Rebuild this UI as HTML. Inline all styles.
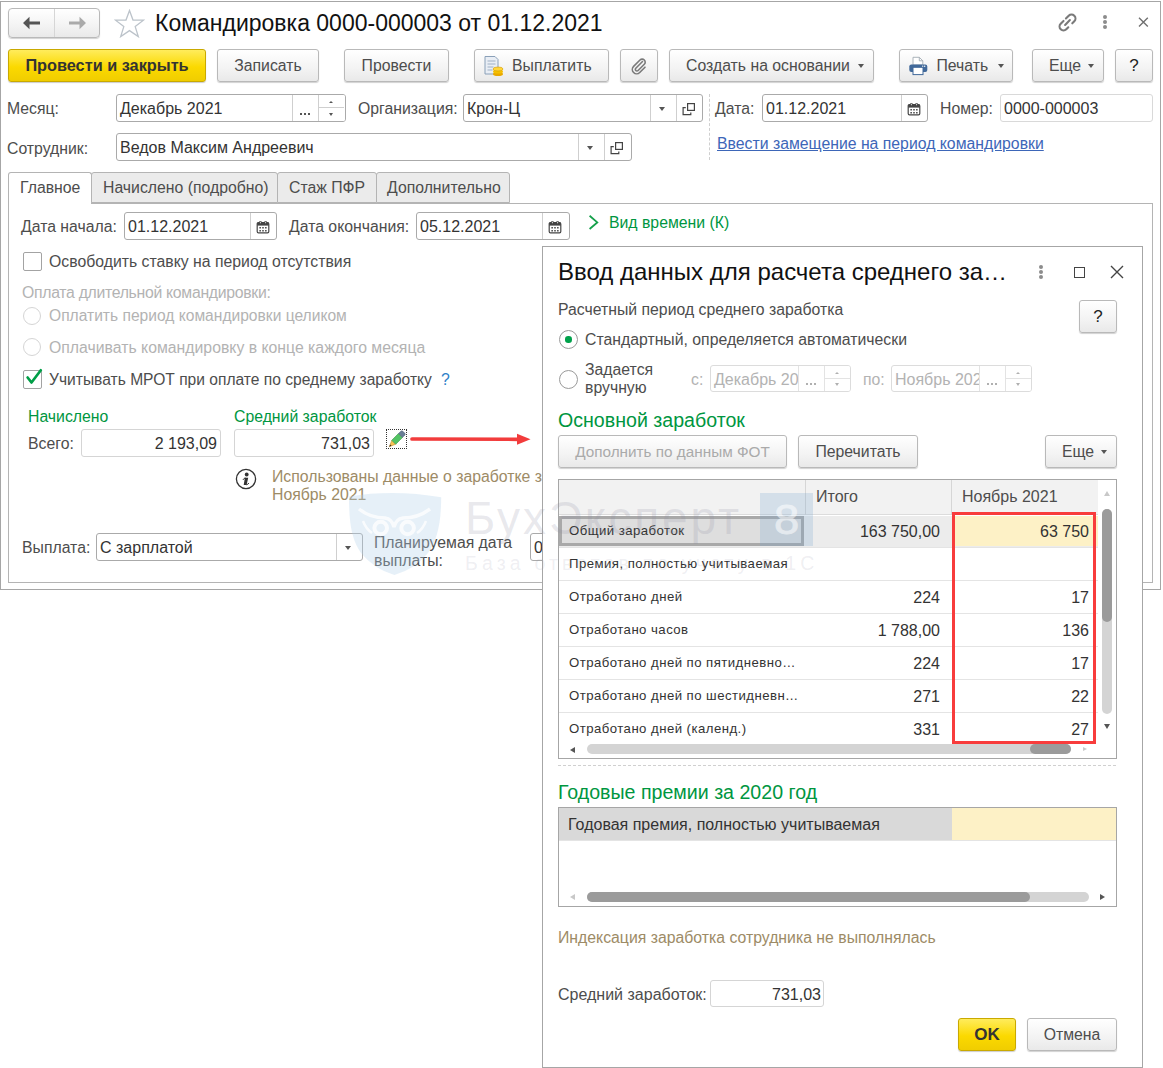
<!DOCTYPE html>
<html><head><meta charset="utf-8">
<style>
*{box-sizing:border-box;margin:0;padding:0}
html,body{width:1163px;height:1068px;overflow:hidden;background:#fff}
body{position:relative;font-family:"Liberation Sans",sans-serif;font-size:15.8px;color:#4d4d4d}
.a{position:absolute}
.t{position:absolute;white-space:nowrap;line-height:20px;margin-top:1px}
.btn{position:absolute;border:1px solid #b9b9b9;border-radius:3px;background:linear-gradient(#ffffff,#f3f3f3 60%,#e9e9e9);box-shadow:0 1px 1px rgba(0,0,0,.18);text-align:center;white-space:nowrap;color:#4d4d4d}
.ybtn{position:absolute;border:1px solid #c9a900;border-radius:3px;background:linear-gradient(#ffec5c,#fbd900 55%,#f0cd00);box-shadow:0 1px 1px rgba(0,0,0,.2);text-align:center;white-space:nowrap;color:#333;font-weight:bold}
.fld{position:absolute;border:1px solid #aaaaaa;border-radius:3px;background:#fff;white-space:nowrap;overflow:hidden}
.fld .t{font-size:16px}
.vd{position:absolute;top:0;bottom:0;width:1px;background:#cfcfcf}
.grn{color:#00963f}
.dis{color:#b3b3b3}
.tan{color:#9d8b66}
</style></head><body>

<!-- main window -->
<div class="a" style="left:0;top:1px;width:1161px;height:589px;border:1px solid #a6a6a6"></div>
<div class="a" style="left:8px;top:203px;width:1145px;height:380px;border:1px solid #b4b4b4"></div>

<!-- header -->
<div class="btn" style="left:8px;top:8px;width:92px;height:30px;border-radius:4px"></div>
<div class="a" style="left:54px;top:9px;width:1px;height:28px;background:#d6d6d6"></div>
<svg class="a" style="left:22px;top:15px" width="20" height="16" viewBox="0 0 20 16"><path d="M1 8 L7.5 1.8 L7.5 6.4 L18 6.4 L18 9.6 L7.5 9.6 L7.5 14.2 Z" fill="#555"/></svg>
<svg class="a" style="left:67px;top:15px" width="20" height="16" viewBox="0 0 20 16"><path d="M19 8 L12.5 1.8 L12.5 6.4 L2 6.4 L2 9.6 L12.5 9.6 L12.5 14.2 Z" fill="#aaa"/></svg>
<svg class="a" style="left:113.5px;top:9px" width="31" height="29" viewBox="0 0 31 29"><path d="M15.5 1.5 L19 11 L29.5 11.2 L21.2 17.6 L24.3 27.6 L15.5 21.6 L6.7 27.6 L9.8 17.6 L1.5 11.2 L12 11 Z" fill="none" stroke="#bcc3ca" stroke-width="1.3" stroke-linejoin="miter"/></svg>
<div class="t" style="left:155px;top:8px;font-size:23px;line-height:28px;color:#111">Командировка 0000-000003 от 01.12.2021</div>
<svg class="a" style="left:1055px;top:9.5px" width="25" height="25" viewBox="0 0 25 25"><g transform="translate(12.5 12.5) scale(1.13) rotate(-45) translate(-12.5 -12.5)" fill="none" stroke="#7a7a7a" stroke-width="1.85" stroke-linecap="round"><path d="M11 9 H7.5 A3.5 3.5 0 0 0 7.5 16 H10"/><path d="M14 9 H17.5 A3.5 3.5 0 0 1 17.5 16 H15"/><path d="M9.5 12.5 H15.5"/></g></svg>
<div class="a" style="left:1102.6px;top:14.5px;width:4px;height:4px;border-radius:50%;background:#8c8c8c"></div>
<div class="a" style="left:1102.6px;top:19.5px;width:4px;height:4px;border-radius:50%;background:#8c8c8c"></div>
<div class="a" style="left:1102.6px;top:24.5px;width:4px;height:4px;border-radius:50%;background:#8c8c8c"></div>
<svg class="a" style="left:1137px;top:16px" width="12" height="12" viewBox="0 0 12 12"><path d="M2 1.8 L10.8 10.4 M10.8 1.8 L2 10.4" stroke="#707070" stroke-width="1.4"/></svg>

<!-- toolbar -->
<div class="ybtn" style="left:8px;top:49px;width:198px;height:33px;line-height:31px;font-size:16.3px">Провести и закрыть</div>
<div class="btn" style="left:217px;top:49px;width:102px;height:33px;line-height:31px">Записать</div>
<div class="btn" style="left:344px;top:49px;width:105px;height:33px;line-height:31px">Провести</div>
<div class="btn" style="left:474px;top:49px;width:135px;height:33px;line-height:31px;text-align:left;padding-left:37px">Выплатить</div>
<svg class="a" style="left:483px;top:55px" width="22" height="22" viewBox="0 0 22 22"><path d="M2 1.5 H12 L15 4.5 V19 H2 Z" fill="#e9eef5" stroke="#8aa0b8"/><path d="M4.5 6h8M4.5 9h8M4.5 12h6M4.5 15h5" stroke="#9fb0c4"/><ellipse cx="15" cy="19" rx="5" ry="2" fill="#e8a800"/><ellipse cx="15" cy="16.5" rx="5" ry="2" fill="#f5c000"/><ellipse cx="15" cy="14" rx="5" ry="2" fill="#ffd53a" stroke="#d49a00" stroke-width=".6"/></svg>
<div class="btn" style="left:620px;top:49px;width:38px;height:33px"></div>
<svg class="a" style="left:629px;top:56px" width="20" height="20" viewBox="0 0 20 20"><path d="M13.5 5.5 L6.8 12.2 a1.6 1.6 0 0 0 2.3 2.3 L15.3 8.3 a3 3 0 0 0 -4.3 -4.3 L4.6 10.4 a4.3 4.3 0 0 0 6.1 6.1 L16 11.2" fill="none" stroke="#7a7a7a" stroke-width="1.6" stroke-linecap="round"/></svg>
<div class="btn" style="left:669px;top:49px;width:205px;height:33px;line-height:31px;text-align:left;padding-left:16px">Создать на основании</div>
<div class="a" style="left:858px;top:64px;width:0;height:0;border-left:3.5px solid transparent;border-right:3.5px solid transparent;border-top:4px solid #555"></div>
<div class="btn" style="left:899px;top:49px;width:114px;height:33px;line-height:31px;text-align:left;padding-left:36.5px">Печать</div>
<svg class="a" style="left:907px;top:55px" width="22" height="22" viewBox="0 0 22 22"><path d="M6 2.3 H12.3 L15.8 5.8 V10 H6 Z" fill="#fff" stroke="#a3abb3" stroke-width=".9"/><path d="M12.3 2.3 V5.8 H15.8" fill="none" stroke="#a3abb3" stroke-width=".9"/><rect x="2.3" y="9.4" width="18" height="7.6" rx="2" fill="#41699a"/><circle cx="15.7" cy="11.2" r=".7" fill="#fff"/><circle cx="17.7" cy="11.2" r=".7" fill="#fff"/><rect x="6" y="12.3" width="10" height="7.3" fill="#fff" stroke="#41699a" stroke-width="1"/></svg>
<div class="a" style="left:998px;top:64px;width:0;height:0;border-left:3.5px solid transparent;border-right:3.5px solid transparent;border-top:4px solid #555"></div>
<div class="btn" style="left:1032px;top:49px;width:72px;height:33px;line-height:31px;text-align:left;padding-left:16px">Еще</div>
<div class="a" style="left:1088px;top:64px;width:0;height:0;border-left:3.5px solid transparent;border-right:3.5px solid transparent;border-top:4px solid #555"></div>
<div class="btn" style="left:1115px;top:49px;width:38px;height:33px;line-height:31px;color:#222;font-size:17px">?</div>

<!-- row 1 -->
<div class="t" style="left:7px;top:98px">Месяц:</div>
<div class="fld" style="left:116px;top:94px;width:230px;height:28px;border-color:#aaaaaa"><span class="t" style="left:3px;top:3px;color:#333">Декабрь 2021</span><div class="a" style="left:175px;top:0;width:54px;height:26px;background:#fff"></div><div class="vd" style="left:175px;background:#cfcfcf"></div><div class="vd" style="left:201px;background:#cfcfcf"></div><div class="a" style="left:182.6px;top:18px;width:2.2px;height:2.2px;background:#555"></div><div class="a" style="left:186.9px;top:18px;width:2.2px;height:2.2px;background:#555"></div><div class="a" style="left:191.2px;top:18px;width:2.2px;height:2.2px;background:#555"></div><div class="a" style="left:202px;top:12px;width:25px;height:1px;background:#cfcfcf"></div><div class="a" style="left:211.5px;top:6.0px;width:0;height:0;border-left:2.5px solid transparent;border-right:2.5px solid transparent;border-bottom:2.5px solid #555"></div><div class="a" style="left:211.5px;top:17.5px;width:0;height:0;border-left:2.5px solid transparent;border-right:2.5px solid transparent;border-top:3px solid #555"></div></div>
<div class="t" style="left:358px;top:98px">Организация:</div>
<div class="fld" style="left:463px;top:94px;width:240px;height:28px"><span class="t" style="left:3px;top:3px;color:#333">Крон-Ц</span><div class="vd" style="left:186px"></div><div class="vd" style="left:212px"></div><div class="a" style="left:195px;top:12px;width:0;height:0;border-left:3.5px solid transparent;border-right:3.5px solid transparent;border-top:4px solid #555"></div><svg class="a" style="left:214px;top:7px" width="18" height="14" viewBox="0 0 18 14"><rect x="9.6" y="1.6" width="6.8" height="6.8" fill="none" stroke="#444" stroke-width="1.2"/><path d="M7.8 5.6 H5.1 V12.6 H12.8 V10.4" fill="none" stroke="#444" stroke-width="1.2"/></svg></div>
<div class="a" style="left:709px;top:94px;width:0;height:66px;border-left:1px dashed #cfcfcf"></div>
<div class="t" style="left:715px;top:98px">Дата:</div>
<div class="fld" style="left:762px;top:94px;width:166px;height:28px"><span class="t" style="left:3px;top:3px;color:#333">01.12.2021</span><div class="vd" style="left:138px"></div><svg class="a" style="left:144px;top:7px" width="14" height="14" viewBox="0 0 14 14"><rect x="1.2" y="2.6" width="11.6" height="10.2" rx="1.3" fill="#fff" stroke="#444" stroke-width="1.2"/><rect x="1.2" y="2.6" width="11.6" height="3" fill="#444"/><path d="M3.2 1.2h2.4v2.6H3.2zM8.4 1.2h2.4v2.6H8.4z" fill="#444"/><path d="M3.9 2h1v1.3h-1zM9.1 2h1v1.3h-1z" fill="#ddd"/><path d="M3.4 7.1h1.5v1.5H3.4zM6.25 7.1h1.5v1.5h-1.5zM9.1 7.1h1.5v1.5H9.1zM3.4 10h1.5v1.5H3.4zM6.25 10h1.5v1.5h-1.5zM9.1 10h1.5v1.5H9.1z" fill="#444"/></svg></div>
<div class="t" style="left:940px;top:98px">Номер:</div>
<div class="fld" style="left:1000px;top:94px;width:153px;height:28px;border-color:#d9d9d9"><span class="t" style="left:3px;top:3px;color:#333">0000-000003</span></div>
<!-- row 2 -->
<div class="t" style="left:7px;top:138px">Сотрудник:</div>
<div class="fld" style="left:116px;top:133px;width:516px;height:28px"><span class="t" style="left:3px;top:3px;color:#333">Ведов Максим Андреевич</span><div class="vd" style="left:461px"></div><div class="vd" style="left:487px"></div><div class="a" style="left:470px;top:12px;width:0;height:0;border-left:3.5px solid transparent;border-right:3.5px solid transparent;border-top:4px solid #555"></div><svg class="a" style="left:489px;top:7px" width="18" height="14" viewBox="0 0 18 14"><rect x="9.6" y="1.6" width="6.8" height="6.8" fill="none" stroke="#444" stroke-width="1.2"/><path d="M7.8 5.6 H5.1 V12.6 H12.8 V10.4" fill="none" stroke="#444" stroke-width="1.2"/></svg></div>
<div class="t" style="left:717px;top:133px;color:#3d66b8;text-decoration:underline">Ввести замещение на период командировки</div>

<!-- tabs -->
<div class="a" style="left:8px;top:172px;width:84px;height:32px;border:1px solid #b4b4b4;border-bottom:none;border-radius:3px 3px 0 0;background:#fff"></div>
<div class="t" style="left:20px;top:177px">Главное</div>
<div class="a" style="left:91px;top:172px;width:187px;height:31px;border:1px solid #b4b4b4;border-radius:3px 3px 0 0;background:#ebebeb"></div>
<div class="t" style="left:103px;top:177px">Начислено (подробно)</div>
<div class="a" style="left:277px;top:172px;width:100px;height:31px;border:1px solid #b4b4b4;border-radius:3px 3px 0 0;background:#ebebeb"></div>
<div class="t" style="left:289px;top:177px">Стаж ПФР</div>
<div class="a" style="left:376px;top:172px;width:134px;height:31px;border:1px solid #b4b4b4;border-radius:3px 3px 0 0;background:#ebebeb"></div>
<div class="t" style="left:387px;top:177px">Дополнительно</div>
<div class="a" style="left:9px;top:203px;width:82px;height:1px;background:#fff"></div>

<!-- dates -->
<div class="t" style="left:21px;top:216px">Дата начала:</div>
<div class="fld" style="left:124px;top:212px;width:153px;height:28px"><span class="t" style="left:3px;top:3px;color:#333">01.12.2021</span><div class="vd" style="left:125px"></div><svg class="a" style="left:131px;top:7px" width="14" height="14" viewBox="0 0 14 14"><rect x="1.2" y="2.6" width="11.6" height="10.2" rx="1.3" fill="#fff" stroke="#444" stroke-width="1.2"/><rect x="1.2" y="2.6" width="11.6" height="3" fill="#444"/><path d="M3.2 1.2h2.4v2.6H3.2zM8.4 1.2h2.4v2.6H8.4z" fill="#444"/><path d="M3.9 2h1v1.3h-1zM9.1 2h1v1.3h-1z" fill="#ddd"/><path d="M3.4 7.1h1.5v1.5H3.4zM6.25 7.1h1.5v1.5h-1.5zM9.1 7.1h1.5v1.5H9.1zM3.4 10h1.5v1.5H3.4zM6.25 10h1.5v1.5h-1.5zM9.1 10h1.5v1.5H9.1z" fill="#444"/></svg></div>
<div class="t" style="left:289px;top:216px">Дата окончания:</div>
<div class="fld" style="left:416px;top:212px;width:154px;height:28px"><span class="t" style="left:3px;top:3px;color:#333">05.12.2021</span><div class="vd" style="left:125px"></div><svg class="a" style="left:131px;top:7px" width="14" height="14" viewBox="0 0 14 14"><rect x="1.2" y="2.6" width="11.6" height="10.2" rx="1.3" fill="#fff" stroke="#444" stroke-width="1.2"/><rect x="1.2" y="2.6" width="11.6" height="3" fill="#444"/><path d="M3.2 1.2h2.4v2.6H3.2zM8.4 1.2h2.4v2.6H8.4z" fill="#444"/><path d="M3.9 2h1v1.3h-1zM9.1 2h1v1.3h-1z" fill="#ddd"/><path d="M3.4 7.1h1.5v1.5H3.4zM6.25 7.1h1.5v1.5h-1.5zM9.1 7.1h1.5v1.5H9.1zM3.4 10h1.5v1.5H3.4zM6.25 10h1.5v1.5h-1.5zM9.1 10h1.5v1.5H9.1z" fill="#444"/></svg></div>
<svg class="a" style="left:587px;top:214px" width="12" height="17" viewBox="0 0 12 17"><path d="M2.6 1.8 L10.3 8.4 L2.6 15" fill="none" stroke="#14a04a" stroke-width="1.8"/></svg>
<div class="t grn" style="left:609px;top:212px">Вид времени (К)</div>

<!-- checks -->
<div class="a" style="left:23px;top:252px;width:19px;height:19px;border:1px solid #a3a3a3;border-radius:2px;background:#fff"></div>
<div class="t" style="left:49px;top:251px">Освободить ставку на период отсутствия</div>
<div class="t dis" style="left:22px;top:281.5px;letter-spacing:-.3px">Оплата длительной командировки:</div>
<div class="a" style="left:23px;top:307px;width:18px;height:18px;border:1px solid #d5d5d5;border-radius:50%"></div>
<div class="t dis" style="left:49px;top:305px;font-size:15.6px">Оплатить период командировки целиком</div>
<div class="a" style="left:23px;top:338px;width:18px;height:18px;border:1px solid #d5d5d5;border-radius:50%"></div>
<div class="t dis" style="left:49px;top:337px">Оплачивать командировку в конце каждого месяца</div>
<div class="a" style="left:23px;top:370px;width:19px;height:19px;border:1px solid #a3a3a3;border-radius:2px;background:#fff"></div>
<svg class="a" style="left:24px;top:366px" width="20" height="20" viewBox="0 0 20 20"><path d="M3.6 11.5 L7.5 16.5 L16.8 4.3" fill="none" stroke="#009e47" stroke-width="2.7" stroke-linecap="round" stroke-linejoin="round"/></svg>
<div class="t" style="left:49px;top:369px;font-size:15.6px">Учитывать МРОТ при оплате по среднему заработку</div>
<div class="t" style="left:441px;top:369px;color:#2f7fc8">?</div>

<!-- accrued -->
<div class="t grn" style="left:28px;top:406px">Начислено</div>
<div class="t grn" style="left:234px;top:406px">Средний заработок</div>
<div class="t" style="left:28px;top:433px">Всего:</div>
<div class="fld" style="left:81px;top:429px;width:140px;height:28px;border-color:#d5d5d5"><span class="t" style="right:3px;top:3px;color:#333">2 193,09</span></div>
<div class="fld" style="left:234px;top:429px;width:140px;height:28px;border-color:#d5d5d5"><span class="t" style="right:3px;top:3px;color:#333">731,03</span></div>
<div class="a" style="left:386px;top:429px;width:21px;height:20px;border:1px dotted #333"></div>
<svg class="a" style="left:386px;top:428px" width="22" height="22" viewBox="0 0 22 22"><g transform="translate(3.3 18.7) rotate(-45)"><path d="M0 0 L6.3 -2.8 L6.3 2.8 Z" fill="#f9c152" stroke="#b88a30" stroke-width=".5"/><path d="M0 0 L2.2 -1 L2.2 1 Z" fill="#3a3020"/><rect x="6.3" y="-2.8" width="9.5" height="5.6" fill="#53c465" stroke="#3a9a48" stroke-width=".6"/><path d="M15.8 -2.8 H19 a1.5 1.5 0 0 1 1.5 1.5 V1.3 a1.5 1.5 0 0 1 -1.5 1.5 H15.8 Z" fill="#687d96" stroke="#55667a" stroke-width=".5"/></g></svg>
<svg class="a" style="left:408px;top:432px" width="126" height="14" viewBox="0 0 126 14"><path d="M4 7 L111 7.3" stroke="#f23c3c" stroke-width="3.7" stroke-linecap="round"/><path d="M109 1.8 L122.5 7.3 L109 12.8 Z" fill="#f23c3c"/></svg>
<svg class="a" style="left:235px;top:468px" width="22" height="22" viewBox="0 0 22 22"><circle cx="11" cy="11" r="9.6" fill="none" stroke="#333" stroke-width="1.3"/><circle cx="11.7" cy="6.5" r="1.9" fill="#333"/><path d="M9.9 9.8 H13.2 L11.6 16.9 H8.7 Z" fill="#333"/><path d="M8 11.9 Q8.8 10.1 10.4 9.9" stroke="#333" stroke-width="1" fill="none"/><path d="M11.3 16.8 Q13 16.6 13.9 15" stroke="#333" stroke-width="1" fill="none"/></svg>
<div class="t tan" style="left:272px;top:467px;line-height:18px">Использованы данные о заработке за<br>Ноябрь 2021</div>

<!-- payout -->
<div class="t" style="left:22px;top:537px">Выплата:</div>
<div class="fld" style="left:96px;top:533px;width:267px;height:28px"><span class="t" style="left:3px;top:3px;color:#333">С зарплатой</span><div class="vd" style="left:239px"></div><div class="a" style="left:248px;top:12px;width:0;height:0;border-left:3.5px solid transparent;border-right:3.5px solid transparent;border-top:4px solid #555"></div></div>
<div class="t" style="left:374px;top:532.5px;line-height:18px">Планируемая дата<br>выплаты:</div>
<div class="fld" style="left:530px;top:533px;width:100px;height:28px"><span class="t" style="left:3px;top:3px;color:#333">01.12.2021</span></div>

<!-- dialog -->
<div class="a" style="left:542px;top:246px;width:601px;height:822px;border:1px solid #a6a6a6;background:#fff"></div>
<div class="t" style="left:558px;top:257px;font-size:24px;line-height:28px;color:#111">Ввод данных для расчета среднего за…</div>
<div class="a" style="left:1039px;top:265px;width:4px;height:4px;border-radius:50%;background:#8c8c8c"></div>
<div class="a" style="left:1039px;top:270px;width:4px;height:4px;border-radius:50%;background:#8c8c8c"></div>
<div class="a" style="left:1039px;top:275px;width:4px;height:4px;border-radius:50%;background:#8c8c8c"></div>
<div class="a" style="left:1074px;top:267px;width:11px;height:11px;border:1.3px solid #444"></div>
<svg class="a" style="left:1110px;top:265px" width="14" height="14" viewBox="0 0 14 14"><path d="M1 1 L13 13 M13 1 L1 13" stroke="#444" stroke-width="1.4"/></svg>
<div class="t" style="left:558px;top:299px">Расчетный период среднего заработка</div>
<div class="btn" style="left:1079px;top:300px;width:38px;height:33px;line-height:31px;color:#222;font-size:17px">?</div>
<div class="a" style="left:559px;top:330px;width:19px;height:19px;border:1px solid #9a9a9a;border-radius:50%"></div>
<div class="a" style="left:565.3px;top:336.4px;width:6.4px;height:6.4px;border-radius:50%;background:#00a14b"></div>
<div class="t" style="left:585px;top:329px">Стандартный, определяется автоматически</div>
<div class="a" style="left:559px;top:370px;width:19px;height:19px;border:1px solid #9a9a9a;border-radius:50%"></div>
<div class="t" style="left:585px;top:360px;line-height:18px">Задается<br>вручную</div>
<div class="t dis" style="left:691px;top:369px">с:</div>
<div class="fld" style="left:710px;top:365px;width:141px;height:27px;border-color:#dcdcdc"><span class="t" style="left:3px;top:3px;color:#b3b3b3">Декабрь 20</span><div class="a" style="left:87px;top:0;width:54px;height:25px;background:#fff"></div><div class="vd" style="left:87px;background:#e3e3e3"></div><div class="vd" style="left:113px;background:#e3e3e3"></div><div class="a" style="left:94.6px;top:17px;width:2.2px;height:2.2px;background:#b0b0b0"></div><div class="a" style="left:98.9px;top:17px;width:2.2px;height:2.2px;background:#b0b0b0"></div><div class="a" style="left:103.2px;top:17px;width:2.2px;height:2.2px;background:#b0b0b0"></div><div class="a" style="left:114px;top:11.5px;width:25px;height:1px;background:#e3e3e3"></div><div class="a" style="left:123.5px;top:5.5px;width:0;height:0;border-left:2.5px solid transparent;border-right:2.5px solid transparent;border-bottom:2.5px solid #b0b0b0"></div><div class="a" style="left:123.5px;top:17.0px;width:0;height:0;border-left:2.5px solid transparent;border-right:2.5px solid transparent;border-top:3px solid #b0b0b0"></div></div>
<div class="t dis" style="left:863px;top:369px">по:</div>
<div class="fld" style="left:891px;top:365px;width:141px;height:27px;border-color:#dcdcdc"><span class="t" style="left:3px;top:3px;color:#b3b3b3">Ноябрь 2021</span><div class="a" style="left:87px;top:0;width:54px;height:25px;background:#fff"></div><div class="vd" style="left:87px;background:#e3e3e3"></div><div class="vd" style="left:113px;background:#e3e3e3"></div><div class="a" style="left:94.6px;top:17px;width:2.2px;height:2.2px;background:#b0b0b0"></div><div class="a" style="left:98.9px;top:17px;width:2.2px;height:2.2px;background:#b0b0b0"></div><div class="a" style="left:103.2px;top:17px;width:2.2px;height:2.2px;background:#b0b0b0"></div><div class="a" style="left:114px;top:11.5px;width:25px;height:1px;background:#e3e3e3"></div><div class="a" style="left:123.5px;top:5.5px;width:0;height:0;border-left:2.5px solid transparent;border-right:2.5px solid transparent;border-bottom:2.5px solid #b0b0b0"></div><div class="a" style="left:123.5px;top:17.0px;width:0;height:0;border-left:2.5px solid transparent;border-right:2.5px solid transparent;border-top:3px solid #b0b0b0"></div></div>
<div class="t grn" style="left:558px;top:407px;font-size:19.6px;line-height:24px">Основной заработок</div>
<div class="btn" style="left:558px;top:435px;width:229px;height:33px;line-height:31px;color:#aaa;font-size:15.3px">Дополнить по данным ФОТ</div>
<div class="btn" style="left:798px;top:435px;width:120px;height:33px;line-height:31px">Перечитать</div>
<div class="btn" style="left:1045px;top:435px;width:72px;height:33px;line-height:31px;text-align:left;padding-left:16px">Еще</div>
<div class="a" style="left:1101px;top:450px;width:0;height:0;border-left:3.5px solid transparent;border-right:3.5px solid transparent;border-top:4px solid #555"></div>

<!-- table 1 -->
<div class="a" style="left:558px;top:479px;width:559px;height:280px;border:1px solid #a6a6a6;background:#fff;overflow:hidden">
  <div class="a" style="left:0;top:0;width:539px;height:35px;background:#f2f2f2;border-bottom:1px solid #dcdcdc"></div>
  <div class="a" style="left:246px;top:0;width:1px;height:35px;background:#d6d6d6"></div>
  <div class="a" style="left:392px;top:0;width:1px;height:35px;background:#d6d6d6"></div>
  <div class="t" style="left:257px;top:6px;font-size:16px">Итого</div>
  <div class="t" style="left:403px;top:6px;font-size:16px">Ноябрь 2021</div>
  <div class="a" style="left:0;top:36px;width:539px;height:31px;background:#ececec"></div>
  <div class="a" style="left:0;top:36px;width:245px;height:30px;background:#dedede;border:3px solid #a9a9a9"></div>
  <div class="a" style="left:396px;top:36px;width:143px;height:30px;background:#fdf1c6"></div>
  <div class="a" style="left:0;top:67px;width:539px;height:1px;background:#e4e4e4"></div>
  <div class="a" style="left:0;top:100px;width:539px;height:1px;background:#e4e4e4"></div>
  <div class="a" style="left:0;top:133px;width:539px;height:1px;background:#e4e4e4"></div>
  <div class="a" style="left:0;top:166px;width:539px;height:1px;background:#e4e4e4"></div>
  <div class="a" style="left:0;top:199px;width:539px;height:1px;background:#e4e4e4"></div>
  <div class="a" style="left:0;top:232px;width:539px;height:1px;background:#e4e4e4"></div>
  <div class="t" style="left:10px;top:40px;font-size:13.2px;letter-spacing:.45px;color:#333">Общий заработок</div>
  <div class="t" style="left:10px;top:73px;font-size:13.2px;letter-spacing:.45px;color:#333">Премия, полностью учитываемая</div>
  <div class="t" style="left:10px;top:106px;font-size:13.2px;letter-spacing:.45px;color:#333">Отработано дней</div>
  <div class="t" style="left:10px;top:139px;font-size:13.2px;letter-spacing:.45px;color:#333">Отработано часов</div>
  <div class="t" style="left:10px;top:172px;font-size:13.2px;letter-spacing:.45px;color:#333">Отработано дней по пятидневно…</div>
  <div class="t" style="left:10px;top:205px;font-size:13.2px;letter-spacing:.45px;color:#333">Отработано дней по шестидневн…</div>
  <div class="t" style="left:10px;top:238px;font-size:13.2px;letter-spacing:.45px;color:#333">Отработано дней (календ.)</div>
  <div class="t" style="right:176px;top:41px;color:#333;font-size:16px">163 750,00</div>
  <div class="t" style="right:176px;top:107px;color:#333;font-size:16px">224</div>
  <div class="t" style="right:176px;top:140px;color:#333;font-size:16px">1 788,00</div>
  <div class="t" style="right:176px;top:173px;color:#333;font-size:16px">224</div>
  <div class="t" style="right:176px;top:206px;color:#333;font-size:16px">271</div>
  <div class="t" style="right:176px;top:239px;color:#333;font-size:16px">331</div>
  <div class="t" style="right:27px;top:41px;color:#333;font-size:16px">63 750</div>
  <div class="t" style="right:27px;top:107px;color:#333;font-size:16px">17</div>
  <div class="t" style="right:27px;top:140px;color:#333;font-size:16px">136</div>
  <div class="t" style="right:27px;top:173px;color:#333;font-size:16px">17</div>
  <div class="t" style="right:27px;top:206px;color:#333;font-size:16px">22</div>
  <div class="t" style="right:27px;top:239px;color:#333;font-size:16px">27</div>
  <!-- v scroll -->
  <div class="a" style="left:543px;top:29px;width:10px;height:205px;border-radius:5px;background:#d4d4d4"></div>
  <div class="a" style="left:543px;top:29px;width:10px;height:113px;border-radius:5px;background:#9b9b9b"></div>
  <div class="a" style="left:545px;top:11px;width:0;height:0;border-left:3px solid transparent;border-right:3px solid transparent;border-bottom:5px solid #c8c8c8"></div>
  <div class="a" style="left:545px;top:244px;width:0;height:0;border-left:3px solid transparent;border-right:3px solid transparent;border-top:5px solid #555"></div>
  <!-- h scroll -->
  <div class="a" style="left:28px;top:264px;width:484px;height:10px;border-radius:5px;background:#d4d4d4"></div>
  <div class="a" style="left:471px;top:264px;width:41px;height:10px;border-radius:5px;background:#9b9b9b"></div>
  <div class="a" style="left:11px;top:267px;width:0;height:0;border-top:3px solid transparent;border-bottom:3px solid transparent;border-right:5px solid #555"></div>
  <div class="a" style="left:524px;top:266.5px;width:0;height:0;border-top:2.5px solid transparent;border-bottom:2.5px solid transparent;border-left:4.5px solid #c8c8c8"></div>
</div>
<div class="a" style="left:951.5px;top:511.5px;width:144.5px;height:232px;border:3.5px solid #f83c3c"></div>
<div class="a" style="left:558px;top:765px;width:558px;height:0;border-top:1px dashed #d0d0d0"></div>

<div class="t grn" style="left:558px;top:779px;font-size:19.6px;line-height:24px">Годовые премии за 2020 год</div>
<!-- table 2 -->
<div class="a" style="left:558px;top:807px;width:559px;height:100px;border:1px solid #a6a6a6;background:#fff;overflow:hidden">
  <div class="a" style="left:0;top:0;width:393px;height:32px;background:#d9d9d9"></div>
  <div class="a" style="left:393px;top:0;width:164px;height:32px;background:#fdf1c6"></div>
  <div class="a" style="left:0;top:32px;width:557px;height:1px;background:#e4e4e4"></div>
  <div class="t" style="left:9px;top:6px;color:#333;font-size:16px">Годовая премия, полностью учитываемая</div>
  <div class="a" style="left:28px;top:84px;width:502px;height:10px;border-radius:5px;background:#d4d4d4"></div>
  <div class="a" style="left:28px;top:84px;width:443px;height:10px;border-radius:5px;background:#9b9b9b"></div>
  <div class="a" style="left:11px;top:86px;width:0;height:0;border-top:3px solid transparent;border-bottom:3px solid transparent;border-right:5px solid #c8c8c8"></div>
  <div class="a" style="left:541px;top:86px;width:0;height:0;border-top:3px solid transparent;border-bottom:3px solid transparent;border-left:5px solid #555"></div>
</div>
<div class="t tan" style="left:558px;top:927px">Индексация заработка сотрудника не выполнялась</div>
<div class="t" style="left:558px;top:984px;font-size:16px">Средний заработок:</div>
<div class="fld" style="left:710px;top:980px;width:114px;height:27px;border-color:#d5d5d5"><span class="t" style="right:2px;top:3px;color:#333">731,03</span></div>
<div class="ybtn" style="left:958px;top:1018px;width:58px;height:33px;line-height:31px;font-size:17px">OK</div>
<div class="btn" style="left:1027px;top:1018px;width:90px;height:33px;line-height:31px">Отмена</div>

<!-- watermark -->
<svg class="a" style="left:340px;top:485px;pointer-events:none" width="490" height="95" viewBox="0 0 490 95">
 <g opacity="1">
  <path d="M9 11.4 Q54 4 101.2 12.3 C101 40 97 55 88 68 Q75 84 54.4 90 Q34 84 21 68 C12 55 9 40 9 11.4 Z" fill="#b3d2ea" fill-opacity="0.33"/>
  <g fill="none" stroke="#fff" stroke-opacity="0.75">
   <circle cx="40.7" cy="43" r="6.3" stroke-width="4"/>
   <circle cx="67.6" cy="43" r="6.3" stroke-width="4"/>
   <path d="M19 24 Q30 33 45 33 Q52 34 54 42 Q56 34 63 33 Q78 33 90 24" stroke-width="3.5"/>
   <path d="M23 36 Q26 44 32 48" stroke-width="2.5"/>
   <path d="M86 36 Q83 44 77 48" stroke-width="2.5"/>
  </g>
  <text x="125" y="49.2" font-family="Liberation Sans" font-size="46" letter-spacing="2.9" fill="#8c8ca0" fill-opacity="0.2">БухЭксперт</text>
  <rect x="420" y="8" width="53" height="53" fill="#7aa8d0" fill-opacity="0.25"/>
  <g opacity="0.55"><text x="446.5" y="49.2" text-anchor="middle" font-family="Liberation Sans" font-size="42" fill="#fff" stroke="#fff" stroke-width="0.8" transform="translate(446.5 0) scale(1.08 1) translate(-446.5 0)">8</text></g>
  <text x="125" y="85.3" font-family="Liberation Sans" font-size="19.5" letter-spacing="4.15" fill="#8c8ca0" fill-opacity="0.15">База ответов по учету в 1С</text>
 </g>
</svg>

</body></html>
